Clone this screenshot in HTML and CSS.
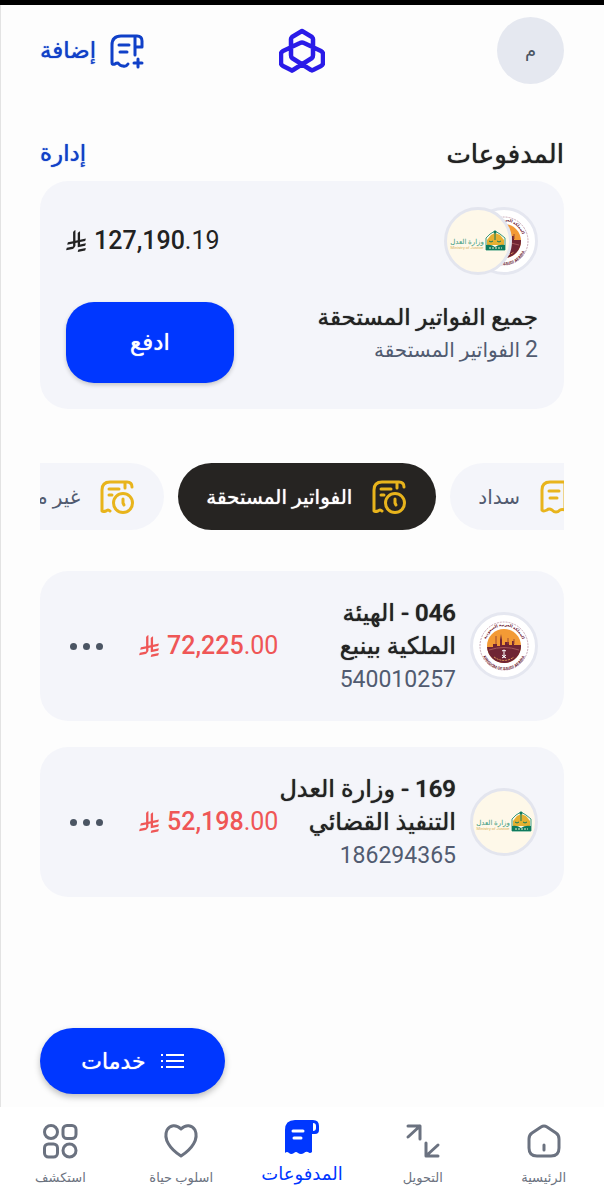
FILE: index.html
```
<!DOCTYPE html>
<html lang="ar" dir="rtl">
<head>
    <meta charset="UTF-8">
    <meta name="viewport" content="width=device-width, initial-scale=1">
    <title>المدفوعات</title>
    <link rel="stylesheet" href="styles.css">
</head>
<body>
    <!-- shared icons -->
    <svg class="sprite" aria-hidden="true">
        <symbol id="riyal" viewBox="0 0 1124 1257">
            <path d="M699.6 1113c-20 44.500-33.300 92.800-38.400 143.400l424.500-90.200c20.100-44.500 33.300-92.800 38.400-143.400z"/>
            <path d="M1085.700 895.800c20.100-44.500 33.300-92.800 38.400-143.400l-330.700 70.300V687.600l292.300-62.100c20.100-44.500 33.300-92.800 38.400-143.400l-330.700 70.300V66.100c-50.700 28.500-95.700 66.300-132.200 111v403.400L529 608.600V0c-50.700 28.400-95.700 66.300-132.300 111v525.700l-295.900 62.900c-20.100 44.500-33.300 92.700-38.400 143.400l334.300-71.100v170.300l-358.300 76.100c-20.100 44.500-33.300 92.800-38.400 143.400l375-79.700c30.500-6.400 56.800-24.400 73.800-49.200l68.800-102c7.100-10.500 11.300-23.300 11.300-37V743.800l132.200-28.100v270.400z"/>
        </symbol>

        <symbol id="bill-clock" viewBox="0 0 34 34">
            <g fill="none" stroke="currentColor" stroke-width="3" stroke-linecap="round" stroke-linejoin="round">
                <path d="M10 31q-2-2-4 0-3 1-4 0V10q0-8 8-8h17q5 0 5 5M25 2v6M9 9h10M9 15h3"/>
                <circle cx="23" cy="23" r="9.500"/>
                <path d="M23 19v4l1 2"/>
            </g>
        </symbol>
    </svg>

    <header class="topbar">
        <button class="avatar" type="button">م</button>
        <svg class="logo" viewBox="0 0 46 46" role="img" aria-label="الراجحي">
            <path d="M23 3 33 9q1 1 1 2v16q0 2-1 3L14 42q-1 1-2 0L4 38q-2-1-2-3V26q0-2 2-3L21 15q2-1 4 0l17 8q2 1 2 3v9q0 2-2 3l-8 4q-1 1-2 0L13 30q-1-1-1-3V11q0-1 1-2z" fill="none" stroke="#2a1be8" stroke-width="4.500" stroke-linejoin="round"/>
        </svg>
        <a class="add-link strong" href="#">
            <svg class="icon" viewBox="0 0 34 34" aria-hidden="true">
                <g fill="none" stroke="currentColor" stroke-width="3" stroke-linecap="round" stroke-linejoin="round">
                    <path d="M18 30q-2 3-5 2-3 0-5-3-2 0-3 1-3 1-3-1V11q0-9 9-9h16q5 0 5 5v6h-7M25 21V2M9 11h10M10 18h7M28 25v8M24 29h8"/>
                </g>
            </svg>
            <span>إضافة</span>
        </a>
    </header>

    <main class="content">
        <div class="section-head strong">
            <h1>المدفوعات</h1>
            <a href="#">إدارة</a>
        </div>

        <section class="summary">
            <div class="summary-row">
                <div class="logos">
                    <svg class="badge" viewBox="0 0 68 68">
                        <g id="seal">
                            <circle cx="34" cy="34" r="32.500" fill="#fff" stroke="#e5e7f0" stroke-width="3"/>
                            <circle cx="34" cy="34" r="24" fill="none" stroke="#c9a9b6" stroke-width="1" stroke-dasharray="2 1"/>
                            <circle cx="34" cy="34" r="17" fill="#f39a35"/>
                            <path d="M17 35h6v-3h4v2h3v-6l1-6 1 6v5h3v-3h4v3h3v-4h2v4h7a17 17 0 0 1-34 2z" fill="#6f2434"/>
                            <path d="M26 24v8M38 26v6M44 27v5" stroke="#a04a32" stroke-width="1"/>
                            <path d="M19 38q15-5 30 0" fill="none" stroke="#a5575a" stroke-width="1"/>
                            <path d="M34 38v8M32 39q2-2 4 0M32 46l4-3M36 46l-4-3" fill="none" stroke="#fff" stroke-width="1"/>
                            <path d="M24 45q10 7 20 0" fill="none" stroke="#e8a05a" stroke-width="1" stroke-dasharray="2 1"/>
                            <path id="arc-top" d="M15 33a19 19 0 0 1 38 0" fill="none"/>
                            <path id="arc-bottom" d="M11 35a23 23 0 0 0 46 0" fill="none"/>
                            <text class="seal-text" direction="rtl" text-anchor="middle"><textPath href="#arc-top" startOffset="50%">المملكة العربية السعودية</textPath></text>
                            <text class="seal-text" direction="ltr" text-anchor="middle"><textPath href="#arc-bottom" startOffset="50%">KINGDOM OF SAUDI ARABIA</textPath></text>
                        </g>
                    </svg>
                    <svg class="badge badge-over" viewBox="0 0 68 68">
                        <g id="justice">
                            <circle cx="34" cy="34" r="32.500" fill="#fef8e9" stroke="#e3e5ee" stroke-width="3"/>
                            <path d="M42 43V31l4-4 5-3 5 3 5 4v12z" fill="#fef8e9" stroke="#3a9b80" stroke-width="1"/>
                            <path d="M43 38v-5l4-5 4-2 5 2 4 5v5z" fill="#e5b031"/>
                            <path d="M51 24v9M45 34q2 2 4 0M53 34q2 2 4 0" fill="none" stroke="#0e7a5d" stroke-width="1"/>
                            <circle cx="51" cy="25" r="1.500" fill="#0e7a5d"/>
                            <path d="M42 38q5-1 9 2 4-3 10-2v5H42z" fill="#0e7a5d"/>
                            <path d="M45 41h13" stroke="#f4efcd" stroke-width="1" stroke-dasharray="2 1"/>
                            <text class="justice-ar" x="23" y="37" text-anchor="middle">وزارة العدل</text>
                            <text class="justice-en" direction="ltr" x="23" y="42" text-anchor="middle">Ministry of Justice</text>
                        </g>
                    </svg>
                </div>
                <p class="amount"><svg class="riyal"><use href="#riyal"/></svg><span><b>127,190</b>.19</span></p>
            </div>
            <div class="summary-row summary-pay">
                <div>
                    <h2 class="strong">جميع الفواتير المستحقة</h2>
                    <p class="summary-note"><span class="count">2</span> الفواتير المستحقة</p>
                </div>
                <button class="pay strong" type="button">ادفع</button>
            </div>
        </section>

        <nav class="chips">
            <button class="chip" type="button">
                <svg class="icon" viewBox="0 0 34 34" aria-hidden="true">
                    <g fill="none" stroke="currentColor" stroke-width="3" stroke-linecap="round" stroke-linejoin="round">
                        <path d="M2 30V10q0-8 8-8h17q5 0 5 5v6h-7M25 2v28q-3-1-5 0-4 4-8 0-3-2-5 0-4 2-5 0M9 11h10M10 18h7"/>
                    </g>
                </svg>
                سداد
            </button>
            <button class="chip chip-active strong" type="button">
                <svg class="icon" aria-hidden="true"><use href="#bill-clock"/></svg>
                الفواتير المستحقة
            </button>
            <button class="chip" type="button">
                <svg class="icon" aria-hidden="true"><use href="#bill-clock"/></svg>
                غير مفوترة
            </button>
        </nav>

        <ul class="bills">
            <li class="bill">
                <svg class="badge"><use href="#seal"/></svg>
                <div class="bill-info">
                    <h3 class="strong">046 - الهيئة الملكية بينبع</h3>
                    <p>540010257</p>
                </div>
                <p class="amount due"><svg class="riyal"><use href="#riyal"/></svg><span><b>72,225</b>.00</span></p>
                <button class="more" type="button" aria-label="المزيد"><i></i><i></i><i></i></button>
            </li>
            <li class="bill">
                <svg class="badge"><use href="#justice"/></svg>
                <div class="bill-info">
                    <h3 class="strong">169 - وزارة العدل التنفيذ القضائي</h3>
                    <p>186294365</p>
                </div>
                <p class="amount due"><svg class="riyal"><use href="#riyal"/></svg><span><b>52,198</b>.00</span></p>
                <button class="more" type="button" aria-label="المزيد"><i></i><i></i><i></i></button>
            </li>
        </ul>
    </main>

    <footer class="bottom">
        <button class="services strong" type="button">
            <svg viewBox="0 0 24 16" aria-hidden="true">
                <path d="M6 2h18M6 8h18M6 14h18" stroke="#fff" stroke-width="2"/>
                <path d="M1 2h2M1 8h2M1 14h2" stroke="#fff" stroke-width="2"/>
            </svg>
            خدمات
        </button>
        <nav class="tabs">
            <a class="tab" href="#">
                <svg class="icon" viewBox="0 0 34 34" aria-hidden="true">
                    <path d="M14 3q3-2 6 0l9 6q3 2 3 6v9q0 8-8 8H10q-8 0-8-8v-9q0-4 3-6zM17 21v5" fill="none" stroke="currentColor" stroke-width="3" stroke-linecap="round"/>
                </svg>
                الرئيسية
            </a>
            <a class="tab" href="#">
                <svg class="icon" viewBox="0 0 34 34" aria-hidden="true">
                    <path d="M2 13 14 2M2 2h12v13M32 21 20 32M20 19v13h12" fill="none" stroke="currentColor" stroke-width="3" stroke-linecap="round" stroke-linejoin="round"/>
                </svg>
                التحويل
            </a>
            <a class="tab tab-active" href="#">
                <svg class="icon" viewBox="0 0 34 34" aria-hidden="true">
                    <path d="M0 32V10Q0 0 10 0h18q6 0 6 6v4q0 4-4 4h-3v18q-2 2-4 0-2-1-4 1-3 2-6 0-2-2-4 0-3 2-5 0-2-2-4 0z" fill="currentColor"/>
                    <path d="M28 3v8q3 0 3-3V6q0-3-3-3z" fill="#fff"/>
                    <path d="M8 11h10M9 18h7" stroke="#fff" stroke-width="3" stroke-linecap="round"/>
                </svg>
                المدفوعات
            </a>
            <a class="tab" href="#">
                <svg class="icon" viewBox="0 0 34 34" aria-hidden="true">
                    <path d="M17 5C12 0 6 1 3 6c-4 9 3 19 14 26C28 25 35 15 31 6 28 1 22 0 17 5z" fill="none" stroke="currentColor" stroke-width="3" stroke-linejoin="round"/>
                </svg>
                اسلوب حياة
            </a>
            <a class="tab" href="#">
                <svg class="icon" viewBox="0 0 34 34" aria-hidden="true">
                    <g fill="none" stroke="currentColor" stroke-width="3">
                        <circle cx="8" cy="8" r="6.500"/>
                        <rect x="20" y="1.500" width="13" height="13" rx="4"/>
                        <rect x="1.500" y="20" width="13" height="13" rx="4"/>
                        <circle cx="26.500" cy="26.500" r="6.500"/>
                    </g>
                </svg>
                استكشف
            </a>
        </nav>
    </footer>
</body>
</html>
```
FILE: styles.css
```
* {
    box-sizing: border-box;
}

body {
    margin: 0;
    min-height: 100vh;
    display: flex;
    flex-direction: column;
    border-top: 5px solid #000;
    box-shadow: inset 1px 0 #e3e3e3;
    background-color: #fdfdfd;
    color: #222;
    font-family: Roboto, "DejaVu Sans", sans-serif;
}

h1, h2, h3, p, ul {
    margin: 0;
    padding: 0;
}

a {
    color: #1040c8;
    text-decoration: none;
}

button {
    border: none;
    padding: 0;
    font-family: inherit;
    cursor: pointer;
}

/* the arabic face has no medium weight, so thicken the regular one */
.strong {
    font-weight: 500;
    text-shadow: 0 0 1px currentColor;
}

.sprite {
    position: absolute;
    width: 0;
    height: 0;
}

.icon {
    width: 34px;
    height: 34px;
    flex: none;
    overflow: visible;
}

/* header */
.topbar {
    display: grid;
    grid-template-columns: 1fr auto 1fr;
    align-items: center;
    padding: 12px 40px 0;
}

.avatar {
    width: 67px;
    height: 67px;
    border-radius: 50%;
    background-color: #e5e8f0;
    color: #4b5563;
    font-size: 18px;
}

.logo {
    width: 46px;
    height: 46px;
}

.add-link {
    justify-self: end;
    display: flex;
    align-items: center;
    gap: 14px;
    font-size: 23px;
}

/* content */
.content {
    padding: 42px 40px 0;
}

.section-head {
    display: flex;
    justify-content: space-between;
    align-items: center;
    height: 55px;
    font-size: 23px;
}

h1 {
    font-size: 26px;
    font-weight: 500;
}

.summary {
    display: flex;
    flex-direction: column;
    gap: 27px;
    padding: 26px;
    border-radius: 28px;
    background-color: #f4f5fa;
}

.summary-row {
    display: flex;
    justify-content: space-between;
    align-items: center;
}

.summary-pay {
    align-items: flex-start;
}

.logos {
    display: flex;
}

.badge {
    width: 68px;
    height: 68px;
    flex: none;
}

.badge-over {
    margin-right: -42px;
}

.seal-text {
    font-size: 4px;
    font-weight: 700;
    fill: #6f2434;
}

.justice-ar {
    font-size: 7px;
    fill: #3a9b80;
}

.justice-en {
    font-size: 4px;
    fill: #d6b35c;
}

.amount {
    display: flex;
    direction: ltr;
    align-items: center;
    gap: 8px;
    font-size: 25px;
    line-height: 32px;
}

.amount b {
    font-weight: 500;
}

.riyal {
    width: 20px;
    height: 22px;
    fill: currentColor;
}

.due {
    color: #ef5656;
}

h2 {
    font-size: 23px;
    line-height: 32px;
}

.summary-note {
    color: #515b70;
    font-size: 20px;
    line-height: 32px;
}

.count {
    font-size: 23px;
}

.pay {
    width: 168px;
    height: 81px;
    border-radius: 28px;
    background-color: #0037ff;
    box-shadow: 0 2px 4px rgba(0, 0, 0, 0.2);
    color: #fff;
    font-size: 23px;
}

/* filters */
.chips {
    display: flex;
    gap: 14px;
    margin-top: 54px;
    overflow: hidden;
}

.chip {
    display: flex;
    flex: none;
    align-items: center;
    gap: 20px;
    height: 67px;
    padding: 0 30px 0 28px;
    border-radius: 34px;
    background-color: #f4f5fa;
    color: #515b70;
    font-size: 20px;
    white-space: nowrap;
}

/* the row rests scrolled to the active filter */
.chip:first-child {
    margin-right: -40px;
}

.chip .icon {
    color: #e8b41c;
}

.chip-active {
    background-color: #262422;
    color: #fff;
}

/* bills */
.bills {
    display: grid;
    gap: 26px;
    margin-top: 41px;
    list-style: none;
}

.bill {
    display: flex;
    align-items: center;
    min-height: 150px;
    padding: 16px 26px;
    border-radius: 28px;
    background-color: #f4f5fa;
}

.bill-info {
    flex: 1;
    padding-right: 14px;
}

.bill-info h3 {
    font-size: 24px;
    line-height: 33px;
}

.bill-info p {
    color: #515b70;
    font-size: 23px;
    line-height: 33px;
}

.more {
    display: flex;
    gap: 6px;
    margin-right: 32px;
    padding: 12px 4px;
    background: none;
}

.more i {
    width: 7px;
    height: 7px;
    border-radius: 50%;
    background-color: #4b5563;
}

/* bottom */
.bottom {
    margin-top: auto;
}

.services {
    display: flex;
    align-items: center;
    justify-content: center;
    gap: 14px;
    width: 185px;
    height: 66px;
    margin: 0 auto 13px 40px;
    border-radius: 33px;
    background-color: #0037ff;
    box-shadow: 0 3px 6px rgba(0, 0, 0, 0.25);
    color: #fff;
    font-size: 22px;
}

.services svg {
    width: 24px;
    height: 16px;
}

.tabs {
    display: grid;
    grid-template-columns: repeat(5, 1fr);
    height: 93px;
    padding-top: 17px;
    background-color: #fff;
}

.tab {
    display: flex;
    flex-direction: column;
    align-items: center;
    gap: 8px;
    color: #6b7280;
    font-size: 13px;
    line-height: 24px;
    white-space: nowrap;
}

.tab-active {
    margin-top: -4px;
    color: #0037ff;
    font-size: 18px;
}
```
